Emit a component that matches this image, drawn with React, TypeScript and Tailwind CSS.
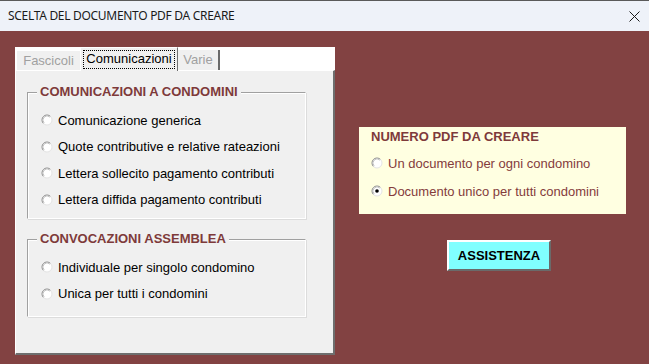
import React from 'react';

const sans = { fontFamily: '"Liberation Sans", Arial, sans-serif' };

function Radio({ checked = false }: { checked?: boolean }) {
  return (
    <svg width="12" height="12" viewBox="0 0 12 12" className="shrink-0">
      <circle cx="6" cy="6" r="5" fill="#ffffff" />
      <path d="M2.46 9.54 A5 5 0 0 1 9.54 2.46" stroke="#8c8c8c" fill="none" strokeWidth="1" />
      <path d="M9.54 2.46 A5 5 0 0 1 2.46 9.54" stroke="#e4e4e4" fill="none" strokeWidth="1" />
      <path d="M3.17 8.83 A4 4 0 0 1 8.83 3.17" stroke="#c4c4c4" fill="none" strokeWidth="1" />
      {checked && <circle cx="6" cy="6" r="1.8" fill="#000000" />}
    </svg>
  );
}

function Option({ label, checked, color = 'text-black' }: { label: string; checked?: boolean; color?: string }) {
  return (
    <div className="flex items-center h-[26.5px]">
      <Radio checked={checked} />
      <span className={`ml-[5px] text-[13px] leading-none ${color}`}>{label}</span>
    </div>
  );
}

function Frame({ title, items, pb }: { title: string; items: string[]; pb: string }) {
  return (
    <div className={`relative ml-[11px] w-[279px] border-l border-t border-[#a0a0a0] border-r border-b border-r-white border-b-white shadow-[inset_1px_1px_0_#ffffff,1px_1px_0_#dcdcdc] pt-[14px] pl-[13px] ${pb}`}>
      <div className="absolute -top-[9px] left-[9px] bg-[#f0f0f0] px-[3px] text-[13px] leading-[16px] font-bold text-[#7e3a3a]">
        {title}
      </div>
      {items.map((it) => (
        <Option key={it} label={it} />
      ))}
    </div>
  );
}

export default function App() {
  return (
    <div className="w-[649px] h-[364px] overflow-hidden flex flex-col bg-[#824242]" style={sans}>
      {/* Title bar */}
      <div className="h-[31px] shrink-0 bg-[#eef2f9] border-t border-[#5a5a5a] flex items-center justify-between pl-[8px] pr-[9px]">
        <span className="text-[12px] text-[#1a1a1a] tracking-[-0.3px]" style={{ fontFamily: '"Noto Sans", sans-serif' }}>
          SCELTA DEL DOCUMENTO PDF DA CREARE
        </span>
        <svg width="11" height="11" viewBox="0 0 11 11">
          <path d="M0.5 0.5 L10.5 10.5 M10.5 0.5 L0.5 10.5" stroke="#1a1a1a" strokeWidth="1" />
        </svg>
      </div>

      <div className="flex flex-1 pl-[15px] pt-[16px]">
        {/* Tab control */}
        <div className="w-[320px] h-[308px] flex flex-col">
          <div className="h-[23px] bg-white flex items-end pl-px relative z-10">
            <div className="w-[64px] h-[20px] bg-[#f0f0f0] border-l border-t border-white flex items-center justify-center text-[13px] text-[#a0a0a0]">
              Fascicoli
            </div>
            <div className="w-[98px] h-[24px] -mb-px bg-[#f0f0f0] border-l border-t border-white border-r border-r-[#707070] flex items-center justify-center">
              <span className="text-[13px] leading-[15px] text-black border border-dotted border-black px-[2px] pb-[2px]">
                Comunicazioni
              </span>
            </div>
            <div className="w-[42px] h-[20px] bg-[#f0f0f0] border-r-2 border-r-[#6a6a6a] flex items-center justify-center text-[13px] text-[#a0a0a0]">
              Varie
            </div>
          </div>
          <div className="flex-1 bg-[#f0f0f0] border-l border-t border-white border-r-2 border-b-2 border-r-[#6e6e6e] border-b-[#6e6e6e] pt-[21px]">
            <Frame
              title="COMUNICAZIONI A CONDOMINI"
              pb="pb-[5px]"
              items={[
                'Comunicazione generica',
                'Quote contributive e relative rateazioni',
                'Lettera sollecito pagamento contributi',
                'Lettera diffida pagamento contributi',
              ]}
            />
            <div className="h-[20px]" />
            <Frame
              title="CONVOCAZIONI ASSEMBLEA"
              pb="pb-[9px]"
              items={['Individuale per singolo condomino', 'Unica per tutti i condomini']}
            />
          </div>
        </div>

        {/* Right side */}
        <div className="ml-[24px] pt-[80px] flex flex-col">
          <div className="w-[267px] h-[87px] bg-[#ffffe1] pl-[12px] pt-[2px]">
            <div className="text-[13px] leading-[16px] font-bold text-[#7e3a3a]">NUMERO PDF DA CREARE</div>
            <div className="mt-[5px]">
              <Option label="Un documento per ogni condomino" color="text-[#843c3c]" />
            </div>
            <div className="mt-[1.5px]">
              <Option label="Documento unico per tutti condomini" checked color="text-[#843c3c]" />
            </div>
          </div>
          <button className="mt-[26px] ml-[88px] w-[104px] h-[31px] bg-[#80ffff] border-t-2 border-l-2 border-white border-r-2 border-b-2 border-r-[#6a6a6a] border-b-[#6a6a6a] text-[13px] font-bold text-black">
            ASSISTENZA
          </button>
        </div>
      </div>
    </div>
  );
}
